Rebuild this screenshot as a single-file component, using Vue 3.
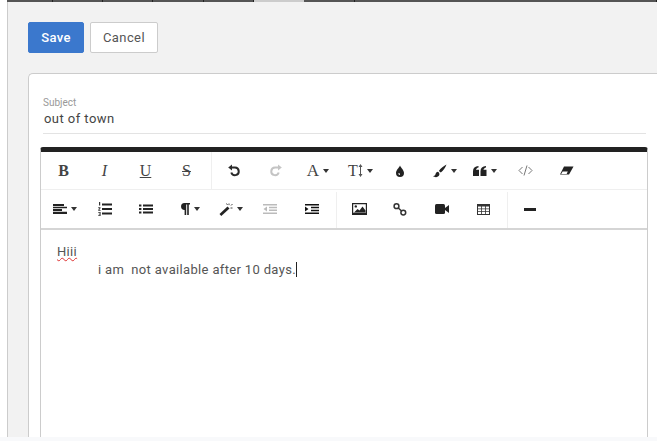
<script setup>
const row1 = [
  { id: 'b', text: 'B', cls: 'g-b' },
  { id: 'i', text: 'I', cls: 'g-i' },
  { id: 'u', text: 'U', cls: 'g-u' },
  { id: 's', text: 'S', cls: 'g-s' },
]
const segments = [46, 50, 50, 51, 50, 50, 51, 302]
</script>

<template>
  <div class="page">
    <div class="topline">
      <span class="seg" v-for="(w, i) in segments" :key="i" :class="{ light: i === 5 }" :style="{ width: w + 'px' }"></span>
    </div>
    <div class="shell">
      <div class="actions">
        <button class="btn save">Save</button>
        <button class="btn cancel">Cancel</button>
      </div>
      <div class="card">
        <label class="lbl">Subject</label>
        <div class="subject">out of town</div>
        <div class="editor">
          <div class="toolbar">
            <div class="row first">
              <span class="tool t1 g" v-for="b in row1" :key="b.id" :class="b.cls">{{ b.text }}</span>
              <span class="vsep s1"></span>
              <span class="tool undo">
                <svg width="14" height="14" viewBox="0 0 14 14"><path d="M3.200 3.600H8a3.800 3.800 0 1 1-3.700 4.900" fill="none" stroke="#2a2a2a" stroke-width="2"/><path d="M1.200 3.600 5 .6v6z" fill="#2a2a2a"/></svg>
              </span>
              <span class="tool redo">
                <svg width="14" height="14" viewBox="0 0 14 14"><path d="M10.800 3.600H6a3.800 3.800 0 1 0 3.700 4.900" fill="none" stroke="#c4c4c4" stroke-width="2"/><path d="M12.800 3.600 9 .6v6z" fill="#c4c4c4"/></svg>
              </span>
              <span class="tool fa g">A<i class="caret"></i></span>
              <span class="tool ft g">T<svg class="updown" width="5" height="13" viewBox="0 0 5 13"><path d="M2.500 1v11" stroke="#555" stroke-width="1"/><path d="M2.500 0 4.500 3h-4zM2.500 13 .5 10h4z" fill="#555"/></svg><i class="caret"></i></span>
              <span class="tool drop">
                <svg width="10" height="12" viewBox="0 0 10 12"><path fill-rule="evenodd" d="M5 .5C6 3 9 5 9 8a4 4 0 0 1-8 0C1 5 4 3 5 .5zM3.200 8.200A1.900 1.900 0 0 0 5 10V8.600z" fill="#222"/></svg>
              </span>
              <span class="tool brush">
                <svg width="15" height="14" viewBox="0 0 15 14"><path d="M14.500.5C12 1.600 8.500 4.500 6.800 7l2 1.600C11 6.800 13.600 3.200 14.500.5zM5.700 7.800C3.800 8 3.800 10 3.200 11c-.5.8-1.400 1-2.200 1 1.500 1.500 5 1.800 6.300-.9.400-1-.100-3.200-1.600-3.300z" fill="#222"/></svg>
                <i class="caret"></i>
              </span>
              <span class="tool quote">
                <svg width="14" height="10" viewBox="0 0 14 10"><path d="M0 5.200C0 2 2 .6 5.500 0v1.600C4 2 3.200 2.800 3 3.800h3V10H0zM7.500 5.200C7.500 2 9.500.6 13 0v1.600c-1.500.4-2.300 1.200-2.500 2.200h3V10h-6z" fill="#222"/></svg>
                <i class="caret"></i>
              </span>
              <span class="tool code">
                <svg width="15" height="11" viewBox="0 0 15 11"><path d="M4.500 2 1 5.500 4.500 9M10.500 2 14 5.500 10.500 9M9 .5l-3 10" fill="none" stroke="#777" stroke-width="1"/></svg>
              </span>
              <span class="tool eraser">
                <svg width="15" height="10" viewBox="0 0 15 10"><path d="M5 .5h9.500L10 8.500H1z" fill="#222"/><path d="M3.600 5.500H8.800L7.600 8H2.200z" fill="#fff"/></svg>
              </span>
            </div>
            <div class="row second">
              <span class="tool align">
                <svg width="14" height="10" viewBox="0 0 14 10"><path d="M0 0h11v2H0zM0 2.700h14v1.600H0zM0 5h9v2H0zM0 7.800h14V10H0z" fill="#222"/></svg>
                <i class="caret"></i>
              </span>
              <span class="tool ol">
                <svg width="14" height="14" viewBox="0 0 14 14"><path d="M4 1.500h10v2H4zM4 6h10v2H4zM4 10.500h10v2H4z" fill="#222"/><path d="M1 0h1.200v3.500H1zM.2 5.300h2.300v1L1.300 8h1.300v.8H.2v-.8L1.500 6.200H.2zM.2 10h2.400v4H.2v-.8h1.500v-.8H.8v-.6h.9v-1H.2z" fill="#333"/></svg>
              </span>
              <span class="tool ul">
                <svg width="14" height="10" viewBox="0 0 14 10"><path d="M4 .5h10v2H4zM4 4h10v2H4zM4 7.500h10v2H4zM0 .5h2.400v2H0zM0 4h2.400v2H0zM0 7.500h2.400v2H0z" fill="#222"/></svg>
              </span>
              <span class="tool para">
                <svg width="10" height="12" viewBox="0 0 10 12"><path d="M4.500 0H10v1.500H8.800V12H7.200V1.500H6.200V12H4.600V7A3.500 3.500 0 0 1 4.500 0z" fill="#222"/></svg>
                <i class="caret"></i>
              </span>
              <span class="tool wand">
                <svg width="14" height="13" viewBox="0 0 14 13"><path d="M8.500 3.500.5 11l1.800 2L10.500 5.500z" fill="#222"/><path d="M10 .5v1.600M13.500 1l-1.500 1.500M7.500.5l1 1.500M13.500 5h-2" stroke="#444" fill="none"/></svg>
                <i class="caret"></i>
              </span>
              <span class="tool outdent">
                <svg width="14" height="10" viewBox="0 0 14 10"><path d="M0 0h14v1.400H0zM6 2.800h8v1.400H6zM6 5.600h8V7H6zM0 8.600h14V10H0zM4 2.500v5L.5 5z" fill="#bbb"/></svg>
              </span>
              <span class="tool indent">
                <svg width="14" height="10" viewBox="0 0 14 10"><path d="M0 0h14v1.500H0zM6 2.800h8v1.500H6zM6 5.700h8v1.500H6zM0 8.500h14V10H0zM0 2.500v5L3.500 5z" fill="#111"/></svg>
              </span>
              <span class="vsep s2"></span>
              <span class="tool image">
                <svg width="15" height="12" viewBox="0 0 15 12"><path fill-rule="evenodd" d="M0 0h15v12H0zM1.200 1.200v8.600h12.600V1.200z" fill="#222"/><path d="M2 9.500 5.500 6l2 1.500L10.500 3.500l3 4v2z" fill="#222"/><circle cx="3.800" cy="3.400" r="1.200" fill="#222"/></svg>
              </span>
              <span class="tool link">
                <svg width="14" height="13" viewBox="0 0 14 13"><g fill="none" stroke="#333" stroke-width="1.500"><circle cx="3.500" cy="3.200" r="2.400"/><circle cx="10.300" cy="9.600" r="2.400"/><path d="M5.300 5l3 2.800"/></g></svg>
              </span>
              <span class="tool video">
                <svg width="14" height="10" viewBox="0 0 14 10"><rect width="10" height="10" rx="1.500" fill="#222"/><path d="M10 4 14 1v8l-4-3z" fill="#222"/></svg>
              </span>
              <span class="tool table">
                <svg width="13" height="11" viewBox="0 0 13 11"><path fill-rule="evenodd" d="M0 0h13v11H0zM1 2.500v2h3.200v-2zM5 2.500v2h3v-2zM8.800 2.500v2H12v-2zM1 5.200v2h3.200v-2zM5 5.200v2h3v-2zM8.800 5.200v2H12v-2zM1 8v2h3.200V8zM5 8v2h3V8zM8.800 8v2H12V8z" fill="#333"/></svg>
              </span>
              <span class="vsep s3"></span>
              <span class="tool hr">
                <svg width="12" height="3" viewBox="0 0 12 3"><path d="M0 0h12v3H0z" fill="#222"/></svg>
              </span>
            </div>
          </div>
          <div class="content">
            <div class="hi">Hiii</div>
            <div class="line">i am&nbsp; not available after 10 days.<span class="cursor"></span></div>
          </div>
        </div>
      </div>
    </div>
    <div class="strip"></div>
  </div>
</template>

<style>
html, body { margin: 0; padding: 0; }
</style>

<style scoped>
.page {
  width: 657px;
  height: 441px;
  overflow: hidden;
  background: #fff;
  display: flex;
  flex-direction: column;
  font-family: Roboto, "Liberation Sans", sans-serif;
  color: #444;
}
.topline { display: flex; height: 2px; flex: none; padding-left: 7px; }
.seg { background: #555; height: 2px; border-right: 1px solid #222; box-sizing: border-box; flex: none; }
.seg.light { background: #ccc; border-right-color: #ccc; }
.shell {
  flex: 1;
  min-height: 0;
  margin-left: 7px;
  border-left: 1px solid #ccc;
  background: #f2f2f2;
  padding: 20px 0 0 20px;
}
.actions { display: flex; gap: 6px; height: 31px; }
.btn {
  font: 500 13px Roboto, sans-serif;
  border-radius: 2px;
  padding: 0;
  height: 31px;
  letter-spacing: .4px;
}
.save { width: 56px; background: #3b78cd; color: #fff; border: 1px solid #3b78cd; }
.cancel { width: 68px; background: #fff; color: #555; border: 1px solid #ccc; font-weight: 400; }
.card {
  margin-top: 20px;
  height: 400px;
  background: #fff;
  border: 1px solid #ccc;
  border-right: 0;
  border-radius: 5px 0 0 0;
  padding: 23px 9px 0 11px;
}
.lbl { display: block; font-size: 10px; line-height: 12px; color: #999; margin-left: 3px; }
.subject {
  font-size: 13px;
  line-height: 18px;
  color: #444;
  margin: 0 2px 0 3px;
  padding: 1px 0 5px 1px;
  border-bottom: 1px solid #e3e3e3;
  letter-spacing: .45px;
}
.editor {
  margin-top: 13px;
  height: 300px;
  border: 1px solid #ccc;
  border-top: 5px solid #222;
  border-radius: 3px 3px 0 0;
}
.toolbar { border-bottom: 2px solid #d5d5d5; padding: 0 0 0 2px; height: 78px; box-sizing: border-box; }
.row { display: flex; align-items: center; }
.first { height: 38px; box-sizing: border-box; border-bottom: 1px solid #efefef; margin-left: -2px; padding-left: 2px; }
.second { height: 38px; }
.tool { display: inline-flex; align-items: center; justify-content: center; flex: none; }
.g { font-family: "Liberation Serif", serif; color: #444; }
.t1 { width: 41px; font-size: 16px; }
.g-b { font-weight: 700; }
.g-i { font-style: italic; }
.g-u { text-decoration: underline; }
.g-s { text-decoration: line-through; }
.vsep { width: 1px; align-self: stretch; background: #efefef; flex: none; }
.s1 { margin-left: 4px; }
.s2 { margin: 2px 0 0 2px; }
.s3 { margin: 2px 0 0 6px; }
.undo { width: 43px; }
.redo { width: 41px; }
.fa { width: 44px; font-size: 17px; }
.ft { width: 41px; font-size: 16px; }
.updown { margin-left: 0; }
.drop { width: 38px; }
.brush { width: 50px; }
.quote { width: 31px; }
.code { width: 50px; }
.eraser { width: 32px; }
.align { width: 44px; }
.ol { width: 36px; }
.ul { width: 46px; }
.para { width: 42px; }
.wand { width: 39px; }
.outdent { width: 40px; }
.indent { width: 44px; }
.image { width: 44px; }
.link { width: 38px; }
.video { width: 46px; }
.table { width: 36px; }
.hr { width: 44px; }
.caret {
  display: inline-block;
  width: 0;
  height: 0;
  margin-left: 4px;
  border-left: 3.500px solid transparent;
  border-right: 3.500px solid transparent;
  border-top: 4px solid #333;
}
.content { padding: 13px 16px; font-size: 13px; line-height: 18px; color: #555; letter-spacing: .34px; }
.hi { text-decoration: underline wavy #d33; text-decoration-thickness: 1px; text-underline-offset: 1px; width: max-content; }
.line { margin-left: 41px; }
.cursor { display: inline-block; width: 1px; height: 15px; background: #222; vertical-align: -3px; }
.strip { flex: none; height: 4px; background: #f8f9fb; }
</style>
